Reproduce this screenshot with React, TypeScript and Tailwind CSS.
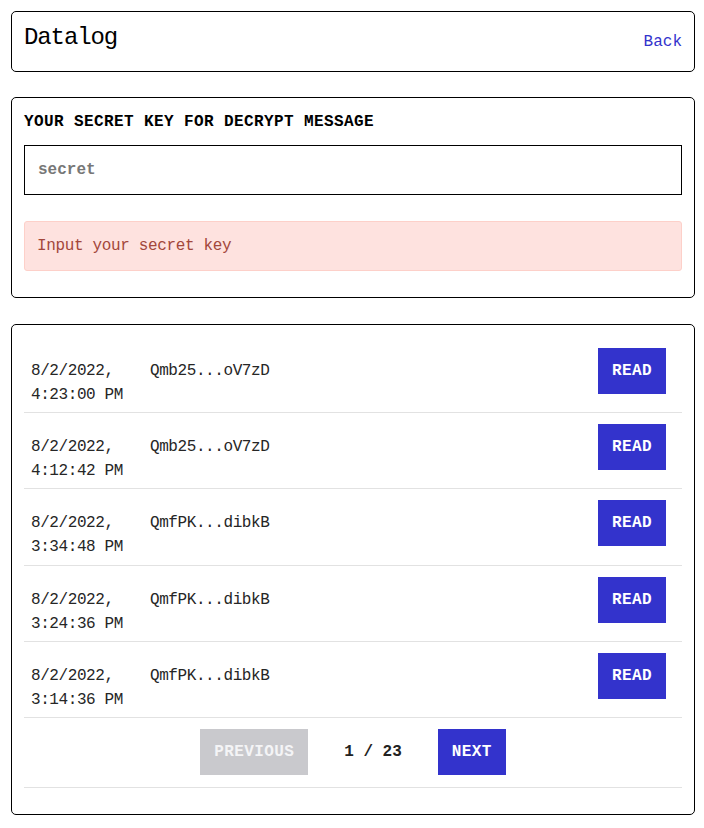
import React from "react";

const rows = [
  { date: "8/2/2022, 4:23:00 PM", hash: "Qmb25...oV7zD", h: "h-[76px]" },
  { date: "8/2/2022, 4:12:42 PM", hash: "Qmb25...oV7zD", h: "h-[76px]" },
  { date: "8/2/2022, 3:34:48 PM", hash: "QmfPK...dibkB", h: "h-[77px]" },
  { date: "8/2/2022, 3:24:36 PM", hash: "QmfPK...dibkB", h: "h-[76px]" },
  { date: "8/2/2022, 3:14:36 PM", hash: "QmfPK...dibkB", h: "h-[76px]" },
];

export default function App() {
  return (
    <div
      className="min-h-[828px] bg-white pl-[11px] pr-[9px] pt-[11px] text-[#222]"
      style={{ fontFamily: '"Liberation Mono", "DejaVu Sans Mono", monospace' }}
    >
      <div className="flex h-[61px] items-center justify-between rounded-[5px] border border-black px-3">
        <h1 className="-mt-[7px] text-[24px] leading-[36px] tracking-[-1.1px] text-black">Datalog</h1>
        <a className="mt-[1px] text-[16px] leading-[24px] text-[#3333cc]">Back</a>
      </div>

      <div className="mt-[25px] rounded-[5px] border border-black px-3 pt-3 pb-[26px]">
        <div className="text-[16px] font-bold leading-[24px] tracking-[0.025em] text-black">
          YOUR SECRET KEY FOR DECRYPT MESSAGE
        </div>
        <input
          className="mt-[11px] block h-[50px] w-full border border-black pl-[13px] pr-3 text-[16px] font-bold leading-[24px] text-[#222] placeholder:text-[#777] outline-none"
          placeholder="secret"
          style={{ fontFamily: '"Liberation Mono", "DejaVu Sans Mono", monospace' }}
        />
        <div className="mt-[26px] h-[50px] rounded-[3px] border border-[#fdd0c9] bg-[#fee2df] px-3 py-3 text-[16px] leading-[24px] tracking-[-0.35px] text-[#a3473b]">
          Input your secret key
        </div>
      </div>

      <div className="mt-[26px] rounded-[5px] border border-black px-3 pt-3 pb-[26px]">
        {rows.map((r, i) => (
          <div
            key={i}
            className={`${r.h} flex items-baseline border-b border-[#e2e2e2] pt-[11px] text-[16px] leading-[24px] text-[#262626]`}
          >
            <div className="w-[126px] shrink-0 pl-[7px] tracking-[-0.42px]">
              <div className="w-[100px]">{r.date}</div>
            </div>
            <div className="flex-1 tracking-[-0.42px]">{r.hash}</div>
            <button className="mr-4 bg-[#3333cc] px-[14px] py-[11px] text-[16px] font-bold leading-[24px] tracking-[0.025em] text-white">
              READ
            </button>
          </div>
        ))}
        <div className="flex h-[70px] items-start justify-center border-b border-[#e2e2e2] pt-[11px]">
          <button className="bg-[#c9c9cd] px-[14px] py-[11px] text-[16px] font-bold leading-[24px] tracking-[0.025em] text-[#f4f4f6]">
            PREVIOUS
          </button>
          <span className="mx-[36px] py-[11px] text-[16px] font-bold leading-[24px] text-[#222]">
            1 / 23
          </span>
          <button className="bg-[#3333cc] px-[14px] py-[11px] text-[16px] font-bold leading-[24px] tracking-[0.025em] text-white">
            NEXT
          </button>
        </div>
      </div>
    </div>
  );
}
